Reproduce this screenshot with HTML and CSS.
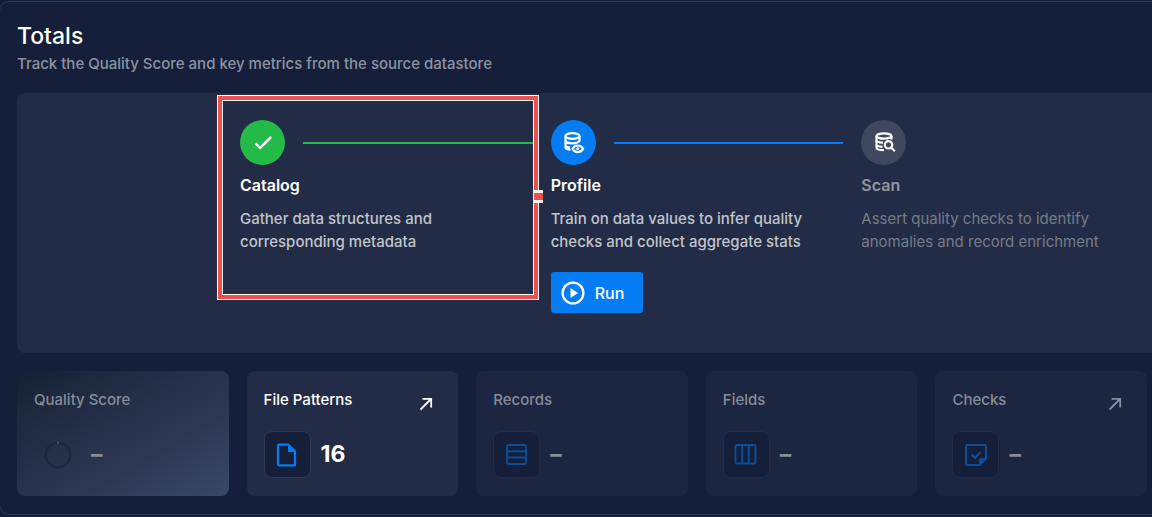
FILE: index.html
```html
<!DOCTYPE html>
<html lang="en">
<head>
<meta charset="utf-8">
<title>Totals</title>
<link rel="stylesheet" href="styles.css">
</head>
<body>
<main class="totals">
  <header class="header">
    <h1 class="title">Totals</h1>
    <p class="subtitle">Track the Quality Score and key metrics from the source datastore</p>
  </header>

  <section class="steps">
    <article class="step">
      <div class="track track-green">
        <span class="badge"><svg viewBox="0 0 24 24" width="24" height="24"><path d="M4.500 12.500 9.200 16.800 20 6" fill="none" stroke="#fff" stroke-width="2.500"/></svg></span>
        <span class="line"></span>
      </div>
      <h2 class="step-title">Catalog</h2>
      <p class="step-text">Gather data structures and<br>corresponding metadata</p>
      <div class="highlight"><span class="handle"></span></div>
    </article>
    <article class="step">
      <div class="track track-blue">
        <span class="badge"><svg viewBox="0 0 24 24" width="24" height="24" fill="none" stroke="#fff" stroke-width="2.200"><ellipse cx="11.500" cy="5" rx="7" ry="2.900"/><path d="M4.500 5V16c0 1.500 2 2.600 5 2.900M18.500 5V10.500M4.500 9.400c0 1.600 3 2.900 7 2.900 3.500 0 6.200-1 7-2.500M4.500 14c0 1.200 1.700 2.200 4.500 2.600"/><path d="M11.500 17.800c1.200-2.300 2.800-3.300 5.200-3.300s4.200 1 5.400 3.300c-1.200 2.300-3 3.300-5.400 3.300s-4-1-5.200-3.300z"/><circle cx="16.700" cy="17.800" r="1.500" fill="#fff" stroke="none"/></svg></span>
        <span class="line"></span>
      </div>
      <h2 class="step-title">Profile</h2>
      <p class="step-text">Train on data values to infer quality<br>checks and collect aggregate stats</p>
      <button class="run" type="button">
        <svg viewBox="0 0 24 24" width="24" height="24"><circle cx="12" cy="12" r="10.400" fill="none" stroke="#fff" stroke-width="2.300"/><path d="M9.500 7v10l7.500-5z" fill="#fff"/></svg>
        Run
      </button>
    </article>
    <article class="step step-muted">
      <div class="track">
        <span class="badge"><svg viewBox="0 0 24 24" width="24" height="24" fill="none" stroke="#fff" stroke-width="2.200"><ellipse cx="12" cy="5" rx="7.500" ry="2.700"/><path d="M4.500 5V16.500c0 1.600 3 2.700 7.500 2.700M19.500 5V8.500M4.500 9c0 1.400 2.300 2.500 6.500 2.700M4.500 13.300c0 1.300 2 2.300 6 2.500"/><circle cx="16.500" cy="13.800" r="3.700"/><path d="M19.200 16.500 22.800 20.200"/></svg></span>
      </div>
      <h2 class="step-title">Scan</h2>
      <p class="step-text">Assert quality checks to identify<br>anomalies and record enrichment</p>
    </article>
  </section>

  <section class="cards">
    <article class="card card-score">
      <h3 class="card-title">Quality Score</h3>
      <div class="metric">
        <span class="gauge"><svg viewBox="0 0 28 28" width="28" height="28"><circle cx="14" cy="14" r="12.300" fill="none" stroke="#1e273c" stroke-width="2.500"/><path d="M14 .5V3" stroke="#657187"/></svg></span>
        <span class="value">–</span>
      </div>
    </article>
    <article class="card card-active">
      <h3 class="card-title">File Patterns</h3>
      <a class="open" href="#patterns" aria-label="Open file patterns"><svg viewBox="0 0 14 14" width="14" height="14"><path d="M1.500 12.500 12 2M3.500 1.800H12.200V10.500" fill="none" stroke="currentColor" stroke-width="1.800"/></svg></a>
      <div class="metric">
        <span class="tile"><svg viewBox="0 0 24 24" width="24" height="24"><path d="M4.200 1.700H13.500L20 8.200V22.300H4.200Q3 22.300 3 21.100V2.900Q3 1.700 4.200 1.700z" fill="none" stroke="currentColor" stroke-width="2.200" stroke-linejoin="round"/><path d="M13 1.500V9h7.500z" fill="currentColor"/></svg></span>
        <span class="value">16</span>
      </div>
    </article>
    <article class="card">
      <h3 class="card-title">Records</h3>
      <div class="metric">
        <span class="tile"><svg viewBox="0 0 24 24" width="24" height="24" fill="none" stroke="currentColor" stroke-width="1.900"><rect x="2" y="2" width="19" height="19" rx="1.500"/><path d="M2 8.300h19M2 14.500h19"/></svg></span>
        <span class="value">–</span>
      </div>
    </article>
    <article class="card">
      <h3 class="card-title">Fields</h3>
      <div class="metric">
        <span class="tile"><svg viewBox="0 0 24 24" width="24" height="24" fill="none" stroke="currentColor" stroke-width="1.900"><rect x="1.500" y="2" width="20" height="18.500" rx="1.500"/><path d="M8.200 2V20.500M14.800 2V20.500"/></svg></span>
        <span class="value">–</span>
      </div>
    </article>
    <article class="card">
      <h3 class="card-title">Checks</h3>
      <a class="open" href="#checks" aria-label="Open checks"><svg viewBox="0 0 14 14" width="14" height="14"><path d="M1.500 12.500 12 2M3.500 1.800H12.200V10.500" fill="none" stroke="currentColor" stroke-width="1.800"/></svg></a>
      <div class="metric">
        <span class="tile"><svg viewBox="0 0 24 24" width="24" height="24" fill="none" stroke="currentColor" stroke-width="2"><path d="M3.500 2H20.500Q22 2 22 3.500V15.500L15.500 22H3.500Q2 22 2 20.500V3.500Q2 2 3.500 2z"/><path d="M15 22.500V18Q15 15 18 15H22.500z" fill="currentColor" stroke="none"/><path d="M7.500 11.500 11 15l5.500-5.800"/></svg></span>
        <span class="value">–</span>
      </div>
    </article>
  </section>
</main>
</body>
</html>
```
FILE: styles.css
```css
* { box-sizing: border-box; }

body {
  margin: 0;
  padding-top: 1px;
  overflow: hidden;
  background: #151e37;
  color: #fff;
  font-family: Inter, "Open Sans", sans-serif;
  font-size: 15px;
}

h1, h2, h3, p { margin: 0; }
svg { display: block; }

.totals {
  margin: 0 -40px 0 -1px;
  padding: 19px 19px 18px 17px;
  border: 1px solid #2f3951;
  border-radius: 10px;
  background: #151f39;
}

.title { font-size: 23px; line-height: 30px; font-weight: 500; }
.subtitle { margin-top: 1px; line-height: 24px; font-weight: 500; color: #8d93a1; }

.steps {
  display: grid;
  grid-template-columns: repeat(3, 1fr);
  min-height: 260px;
  margin-top: 17px;
  padding: 27px 0 40px 223px;
  border-radius: 8px;
  background: #232c46;
}

.step { position: relative; }
.track { display: flex; align-items: center; gap: 18px; padding-right: 18px; }
.badge {
  display: grid;
  place-items: center;
  width: 45px;
  height: 45px;
  border-radius: 50%;
  background: #40485f;
}
.line { flex: 1; height: 2px; }
.track-green .badge, .track-green .line { background: #24ba47; }
.track-blue .badge, .track-blue .line { background: #037cf4; }

.step-title { margin-top: 8px; font-size: 16px; line-height: 24px; font-weight: 600; }
.step-text { margin-top: 10px; line-height: 23px; font-weight: 500; color: #c1c4cb; }
.step-muted .step-title { color: #91959f; }
.step-muted .step-text { font-weight: 400; color: #757b87; }

.run {
  display: flex;
  align-items: center;
  gap: 10px;
  height: 41px;
  margin-top: 19px;
  padding: 0 19px 0 10px;
  border: 0;
  border-radius: 3px;
  background: #037cf4;
  color: #fff;
  font: 500 16px Inter, sans-serif;
}

.highlight {
  position: absolute;
  top: -25px;
  right: 12px;
  left: -23px;
  height: 205px;
  border: 1px solid #fff;
  outline: 1px solid #fff;
  outline-offset: -6px;
  box-shadow: inset 0 0 0 4px #ee504e;
}
.handle {
  position: absolute;
  top: 94px;
  right: -5px;
  width: 9px;
  height: 13px;
  border: solid #fff;
  border-width: 3px 0;
  background: #ee504e;
}

.cards {
  display: grid;
  grid-template-columns: repeat(5, 1fr);
  gap: 18px;
  margin-top: 18px;
  padding-right: 25px;
}
.card {
  position: relative;
  padding: 17px 17px 18px;
  border-radius: 8px;
  background: #1d2640;
  color: #878c99;
}
.card-score { background: linear-gradient(150deg, #162033, #222d45 32%, #2d3953 66%, #3b4863); }
.card-active { background: #232c46; color: #fff; }
.card-title { font-size: 15px; line-height: 24px; font-weight: 500; }
.open { position: absolute; top: 26px; right: 25px; color: inherit; }

.metric { display: flex; align-items: center; gap: 10px; margin-top: 19px; }
.tile, .gauge { display: grid; place-items: center; width: 47px; height: 47px; }
.tile {
  border: 1px solid #232d47;
  border-radius: 8px;
  background: #151f39;
  color: #0b4f99;
}
.card-active .tile { border-color: #303951; color: #037cf4; }
.value { padding-bottom: 2px; font-size: 23px; line-height: 30px; font-weight: 700; }
```
